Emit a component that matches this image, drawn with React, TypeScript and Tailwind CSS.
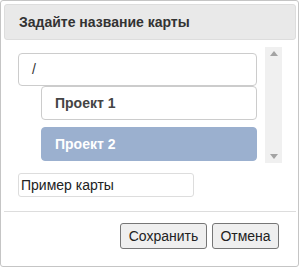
import React from 'react';

const font = { fontFamily: '"Liberation Sans", Arial, sans-serif' };

const ProjectItem: React.FC<{ label: string; active?: boolean; className?: string }> = ({ label, active, className }) => {
  return (
    <div
      className={
        'flex items-center h-[34px] ml-[23px] pl-[13px] rounded-[4px] border text-[14px] font-bold ' +
        (active ? 'bg-[#9bb0cf] border-[#9bb0cf] text-white ' : 'bg-white border-[#cccccc] text-[#444444] ') +
        (className ?? '')
      }
    >
      {label}
    </div>
  );
};

export default function App() {
  return (
    <div className="bg-white" style={font}>
      <div className="w-[299px] h-[267px] border border-[#c5c5c5] rounded-[3px] pt-[3px] pl-[3px] pr-[2px] flex flex-col">
        <div className="h-[36px] shrink-0 bg-[#e9e9e9] border border-[#dddddd] rounded-[3px] flex items-center pl-[14px] text-[14px] font-bold text-[#333333]">
          Задайте название карты
        </div>

        <div className="flex mt-[7px] ml-[14px] h-[116px]">
          <div className="w-[239px] pt-[6px]">
            <div className="h-[33px] flex items-center pl-[13px] rounded-[4px] border border-[#cccccc] bg-white text-[14px] text-[#333333]">
              /
            </div>
            <ProjectItem label="Проект 1" />
            <ProjectItem label="Проект 2" active className="mt-[7px]" />
          </div>
          <div className="w-[17px] ml-[8px] bg-[#f0f0f0] flex flex-col items-center justify-between py-[4px]">
            <svg width="8" height="5" viewBox="0 0 8 5">
              <path d="M0 5 L4 0 L8 5 Z" fill="#a3a3a3" />
            </svg>
            <svg width="8" height="5" viewBox="0 0 8 5">
              <path d="M0 0 L4 5 L8 0 Z" fill="#a3a3a3" />
            </svg>
          </div>
        </div>

        <input
          className="mt-[10px] ml-[14px] w-[176px] h-[24px] border border-[#dddddd] rounded-[3px] px-[2px] text-[14px] text-[#222222] outline-none"
          defaultValue="Пример карты"
          style={font}
        />

        <div className="mt-[14px] h-px bg-[#dddddd]" />

        <div className="flex justify-end gap-[5px] mt-[11px] pr-[17px]">
          <button className="h-[26px] w-[87px] border border-[#767676] rounded-[3px] bg-[#efefef] text-[14px] text-[#222222]">
            Сохранить
          </button>
          <button className="h-[26px] w-[67px] border border-[#767676] rounded-[3px] bg-[#efefef] text-[14px] text-[#222222]">
            Отмена
          </button>
        </div>
      </div>
    </div>
  );
}
